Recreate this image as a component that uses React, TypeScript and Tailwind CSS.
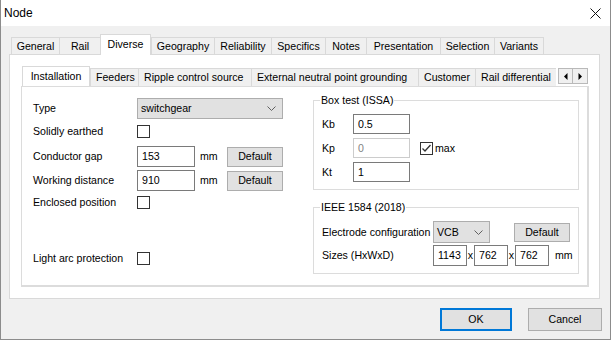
import React from "react";

const outerTabs: [string, number][] = [
  ["General", 48],
  ["Rail", 41],
  ["Diverse", 51],
  ["Geography", 63],
  ["Reliability", 57],
  ["Specifics", 54],
  ["Notes", 41],
  ["Presentation", 74],
  ["Selection", 54],
  ["Variants", 50],
];

const innerTabs: [string, number][] = [
  ["Installation", 68],
  ["Feeders", 48],
  ["Ripple control source", 113],
  ["External neutral point grounding", 167],
  ["Customer", 57],
  ["Rail differential", 83],
];

function Chevron() {
  return (
    <svg width="9" height="5" viewBox="0 0 9 5" className="shrink-0">
      <polyline points="0.5,0.5 4.5,4.5 8.5,0.5" fill="none" stroke="#606060" strokeWidth="1" />
    </svg>
  );
}

function Checkbox({ checked = false }: { checked?: boolean }) {
  return (
    <div className="w-[13px] h-[13px] border border-[#333333] bg-white flex items-center justify-center shrink-0">
      {checked && (
        <svg width="11" height="11" viewBox="0 0 11 11">
          <polyline points="1.5,5.5 4,8 9.5,2" fill="none" stroke="#333333" strokeWidth="1.3" />
        </svg>
      )}
    </div>
  );
}

function TextBox({ value, w, h = 21, disabled = false }: { value: string; w: number; h?: number; disabled?: boolean }) {
  return (
    <div
      className={
        "bg-white border flex items-center pl-[4px] shrink-0 " +
        (disabled ? "border-[#cccccc] text-[#838383]" : "border-[#7a7a7a] text-black")
      }
      style={{ width: w, height: h }}
    >
      {value}
    </div>
  );
}

function Button({ label, w, h }: { label: string; w: number; h: number }) {
  return (
    <div
      className="bg-[#e1e1e1] border border-[#adadad] flex items-center justify-center shrink-0"
      style={{ width: w, height: h }}
    >
      {label}
    </div>
  );
}

export default function App() {
  return (
    <div className="w-[611px] h-[340px] bg-[#f0f0f0] border-l border-r border-b border-[#8c8c8c] flex flex-col text-[10.6px] leading-[13px] text-black font-['Liberation_Sans',Arial,sans-serif] overflow-hidden">
      {/* Title bar */}
      <div className="h-[26px] bg-white flex items-center justify-between pl-[3px] pr-[9px] shrink-0">
        <span className="text-[12px] leading-[14px]">Node</span>
        <svg width="11" height="11" viewBox="0 0 11 11">
          <line x1="0.5" y1="0.5" x2="10.5" y2="10.5" stroke="#111" strokeWidth="1" />
          <line x1="10.5" y1="0.5" x2="0.5" y2="10.5" stroke="#111" strokeWidth="1" />
        </svg>
      </div>

      {/* Outer tab strip */}
      <div className="mt-[8px] ml-[10px] h-[20px] flex items-end relative z-10">
        {outerTabs.map(([t, w]) => {
          const sel = t === "Diverse";
          return (
            <div
              key={t}
              style={{ width: w }}
              className={
                "flex items-center justify-center border-[#d9d9d9] shrink-0 " +
                (sel
                  ? "h-[21px] -mb-px bg-white border-l border-t border-r pb-[2px]"
                  : "h-[17px] bg-[#f0f0f0] border-l border-t" + (t === "Variants" ? " border-r" : ""))
              }
            >
              {t}
            </div>
          );
        })}
      </div>

      {/* Outer panel */}
      <div className="ml-[8px] w-[591px] h-[245px] bg-white border border-[#d9d9d9] pl-[11px] pt-[11px] flex flex-col">
        {/* Inner tab strip */}
        <div className="h-[20px] w-[568px] flex items-end relative z-10">
          <div className="flex items-end w-[535px] overflow-hidden pl-[1px]">
            {innerTabs.map(([t, w]) => {
              const sel = t === "Installation";
              return (
                <div
                  key={t}
                  style={{ width: w }}
                  className={
                    "flex items-center border-[#d9d9d9] shrink-0 whitespace-nowrap " +
                    (sel
                      ? "h-[21px] -mb-px bg-white border-l border-t border-r pb-[2px] justify-center"
                      : "h-[18px] bg-[#f0f0f0] border-l border-t pl-[5px]")
                  }
                >
                  {t}
                </div>
              );
            })}
          </div>
          <div className="self-start mt-[2px] ml-[2px] flex">
            <div className="w-[15px] h-[16px] bg-[#f0f0f0] border border-[#b9b9b9] flex items-center justify-center">
              <svg width="4" height="7" viewBox="0 0 4 7">
                <polygon points="3.5,0 3.5,7 0,3.5" fill="#000" />
              </svg>
            </div>
            <div className="w-[15px] h-[16px] bg-[#f0f0f0] border border-l-0 border-[#b9b9b9] flex items-center justify-center">
              <svg width="4" height="7" viewBox="0 0 4 7">
                <polygon points="0.5,0 0.5,7 4,3.5" fill="#000" />
              </svg>
            </div>
          </div>
        </div>

        {/* Inner panel */}
        <div className="w-[568px] h-[201px] bg-white border border-r-2 border-b-2 border-[#dcdcdc] pl-[11px] flex">
          {/* Left column */}
          <div className="w-[280px] pt-[11px] flex flex-col shrink-0">
            <div className="h-[21px] flex items-center">
              <span className="w-[104px]">Type</span>
              <div className="w-[146px] h-[21px] bg-[#e1e1e1] border border-[#adadad] flex items-center justify-between pl-[3px] pr-[6px]">
                <span>switchgear</span>
                <Chevron />
              </div>
            </div>
            <div className="h-[13px] mt-[6px] flex items-center">
              <span className="w-[104px]">Solidly earthed</span>
              <Checkbox />
            </div>
            <div className="h-[21px] mt-[8px] flex items-center">
              <span className="w-[104px]">Conductor gap</span>
              <TextBox value="153" w={58} />
              <span className="ml-[5px] w-[27px]">mm</span>
              <Button label="Default" w={56} h={20} />
            </div>
            <div className="h-[21px] mt-[3px] flex items-center">
              <span className="w-[104px]">Working distance</span>
              <TextBox value="910" w={58} />
              <span className="ml-[5px] w-[27px]">mm</span>
              <Button label="Default" w={56} h={20} />
            </div>
            <div className="h-[13px] mt-[5px] flex items-center">
              <span className="w-[104px]">Enclosed position</span>
              <Checkbox />
            </div>
            <div className="h-[13px] mt-[43px] flex items-center">
              <span className="w-[104px]">Light arc protection</span>
              <Checkbox />
            </div>
          </div>

          {/* Right column */}
          <div className="w-[266px] pt-[7px] flex flex-col shrink-0">
            <fieldset className="h-[96px] border border-[#dcdcdc] pl-[6px] flex flex-col">
              <legend className="px-[1px] leading-[13px]">Box test (ISSA)</legend>
              <div className="mt-[7px] ml-[2px] flex flex-col gap-[4px]">
                <div className="h-[20px] flex items-center">
                  <span className="w-[31px]">Kb</span>
                  <TextBox value="0.5" w={57} h={20} />
                </div>
                <div className="h-[20px] flex items-center">
                  <span className="w-[31px]">Kp</span>
                  <TextBox value="0" w={57} h={20} disabled />
                  <div className="ml-[10px] mt-[1px] flex items-center gap-[2px]">
                    <Checkbox checked />
                    <span>max</span>
                  </div>
                </div>
                <div className="h-[20px] flex items-center">
                  <span className="w-[31px]">Kt</span>
                  <TextBox value="1" w={57} h={20} />
                </div>
              </div>
            </fieldset>

            <fieldset className="mt-[11px] h-[73px] border border-[#dcdcdc] pl-[6px] flex flex-col">
              <legend className="px-[1px] leading-[13px]">IEEE 1584 (2018)</legend>
              <div className="mt-[7px] ml-[2px] h-[22px] flex items-center">
                <span className="w-[111px] whitespace-nowrap">Electrode configuration</span>
                <div className="w-[57px] h-[22px] bg-[#e1e1e1] border border-[#adadad] flex items-center justify-between pl-[3px] pr-[6px]">
                  <span>VCB</span>
                  <Chevron />
                </div>
                <div className="ml-[24px]">
                  <Button label="Default" w={56} h={19} />
                </div>
              </div>
              <div className="mt-[2px] ml-[2px] h-[21px] flex items-center">
                <span className="w-[111px]">Sizes (HxWxD)</span>
                <TextBox value="1143" w={34} />
                <span className="w-[7px] text-center">x</span>
                <TextBox value="762" w={34} />
                <span className="w-[7px] text-center">x</span>
                <TextBox value="762" w={34} />
                <span className="ml-[6px]">mm</span>
              </div>
            </fieldset>
          </div>
        </div>
      </div>

      {/* Buttons */}
      <div className="mt-[9px] flex justify-end pr-[8px] gap-[16px]">
        <div className="w-[72px] h-[23px] bg-[#e1e1e1] border-2 border-[#0078d7] flex items-center justify-center">OK</div>
        <Button label="Cancel" w={74} h={23} />
      </div>
    </div>
  );
}
